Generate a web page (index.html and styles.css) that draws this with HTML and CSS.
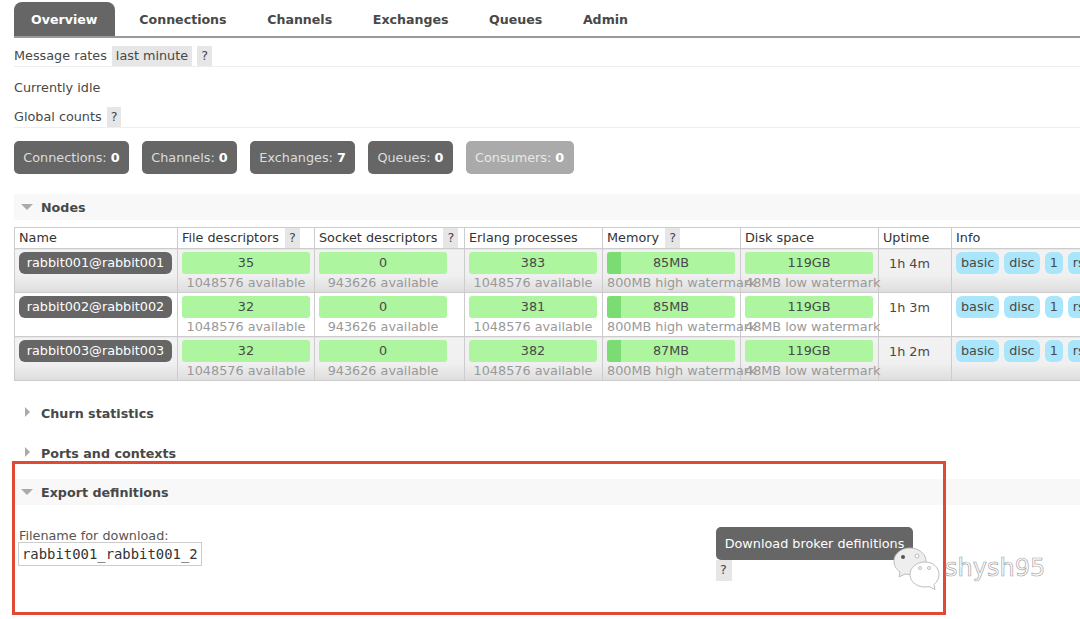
FILE: index.html
```html
<!DOCTYPE html>
<html lang="en">
<head>
<meta charset="UTF-8">
<title>RabbitMQ Management</title>
<link rel="stylesheet" href="styles.css">
</head>
<body>

<ul class="tabs">
  <li class="tab active">Overview</li>
  <li class="tab">Connections</li>
  <li class="tab">Channels</li>
  <li class="tab">Exchanges</li>
  <li class="tab">Queues</li>
  <li class="tab">Admin</li>
</ul>

<div class="main">
  <div class="updatable rates-row">
    <span>Message rates</span>
    <span class="pill">last minute</span>
    <span class="help">?</span>
  </div>
  <p class="idle">Currently idle</p>
  <div class="updatable counts-row">
    <span>Global counts</span>
    <span class="help">?</span>
  </div>

  <div class="totals">
    <div class="total">Connections: <b>0</b></div>
    <div class="total">Channels: <b>0</b></div>
    <div class="total">Exchanges: <b>7</b></div>
    <div class="total">Queues: <b>0</b></div>
    <div class="total faded">Consumers: <b>0</b></div>
  </div>

  <h2 class="section open nodes-head"><i class="arrow-down"></i>Nodes</h2>

  <table class="nodes">
    <colgroup>
      <col class="c-name"><col class="c-file"><col class="c-sock"><col class="c-stat">
      <col class="c-stat"><col class="c-stat"><col class="c-up"><col class="c-info">
    </colgroup>
    <thead>
      <tr>
        <th>Name</th>
        <th>File descriptors <span class="help">?</span></th>
        <th>Socket descriptors <span class="help">?</span></th>
        <th>Erlang processes</th>
        <th>Memory <span class="help">?</span></th>
        <th>Disk space</th>
        <th>Uptime</th>
        <th>Info</th>
      </tr>
    </thead>
    <tbody>
      <tr class="alt1">
        <td><span class="node">rabbit001@rabbit001</span></td>
        <td><div class="bar">35</div><div class="sub">1048576 available</div></td>
        <td><div class="bar">0</div><div class="sub">943626 available</div></td>
        <td><div class="bar">383</div><div class="sub">1048576 available</div></td>
        <td><div class="bar"><span class="fill"></span><span class="val">85MB</span></div><div class="sub left">800MB high watermark</div></td>
        <td><div class="bar">119GB</div><div class="sub left">48MB low watermark</div></td>
        <td class="uptime">1h 4m</td>
        <td><div class="tags"><span class="tag">basic</span><span class="tag">disc</span><span class="tag">1</span><span class="tag">rss</span></div></td>
      </tr>
      <tr class="alt2">
        <td><span class="node">rabbit002@rabbit002</span></td>
        <td><div class="bar">32</div><div class="sub">1048576 available</div></td>
        <td><div class="bar">0</div><div class="sub">943626 available</div></td>
        <td><div class="bar">381</div><div class="sub">1048576 available</div></td>
        <td><div class="bar"><span class="fill"></span><span class="val">85MB</span></div><div class="sub left">800MB high watermark</div></td>
        <td><div class="bar">119GB</div><div class="sub left">48MB low watermark</div></td>
        <td class="uptime">1h 3m</td>
        <td><div class="tags"><span class="tag">basic</span><span class="tag">disc</span><span class="tag">1</span><span class="tag">rss</span></div></td>
      </tr>
      <tr class="alt1">
        <td><span class="node">rabbit003@rabbit003</span></td>
        <td><div class="bar">32</div><div class="sub">1048576 available</div></td>
        <td><div class="bar">0</div><div class="sub">943626 available</div></td>
        <td><div class="bar">382</div><div class="sub">1048576 available</div></td>
        <td><div class="bar"><span class="fill"></span><span class="val">87MB</span></div><div class="sub left">800MB high watermark</div></td>
        <td><div class="bar">119GB</div><div class="sub left">48MB low watermark</div></td>
        <td class="uptime">1h 2m</td>
        <td><div class="tags"><span class="tag">basic</span><span class="tag">disc</span><span class="tag">1</span><span class="tag">rss</span></div></td>
      </tr>
    </tbody>
  </table>

  <h2 class="section churn-head"><i class="arrow-right"></i>Churn statistics</h2>
  <h2 class="section ports-head"><i class="arrow-right"></i>Ports and contexts</h2>
  <h2 class="section open export-head"><i class="arrow-down"></i>Export definitions</h2>

  <div class="export">
    <div class="export-file">
      <div class="file-label">Filename for download:</div>
      <div class="file-input"><div class="file-value">rabbit001_rabbit001_2019-5-1.json</div></div>
    </div>
    <div class="export-action">
      <button class="download" type="button">Download broker definitions</button>
      <span class="help">?</span>
    </div>
  </div>
</div>

<!-- annotation and watermark sit on top of the page -->
<div class="red-box"></div>
<div class="watermark">
  <svg class="wechat" width="49" height="44" viewBox="0 0 49 44" fill="#fff" stroke="#bdbdbd" stroke-width="1">
    <path d="M18 2C9 2 2 8 2 15c0 5 2 8 6 11l-1 5 6-3c2 .5 3 .5 5 .5C27 28.500 34 22 34 15 34 8 27 2 18 2z" fill="#eee"/>
    <path d="M33 16c-9 0-15 6-15 12.500S24 41 33 41c1.500 0 3-.2 4-.5l6 3-1-5c3-2.500 5-6 5-9.500C47 22 42 16 33 16z"/>
    <circle cx="11" cy="11" r="2" fill="#555" stroke="none"/>
    <circle cx="25" cy="10" r="2" fill="#fff"/>
    <circle cx="28" cy="22" r="1.500" fill="#fff"/>
    <circle cx="37" cy="22" r="1.500" fill="#fff"/>
  </svg>
  <span class="mark-text">shysh95</span>
</div>

</body>
</html>
```

FILE: styles.css
```css
* {
  box-sizing: border-box;
  padding: 0;
  margin: 0;
}

html, body {
  height: 100%;
  width: 100%;
  overflow: hidden;
}

body {
  position: relative;
  background: #fff;
  color: #484848;
  font-family: "DejaVu Sans", Verdana, sans-serif;
  font-size: 12.8px;
}

.tabs {
  display: flex;
  list-style: none;
  height: 38px;
  margin: 0 0 0 14px;
  padding-top: 2px;
  border-bottom: 2px solid #999;
}

.tab {
  height: 34px;
  padding: 0 20.300px;
  font-weight: bold;
  font-size: 12.6px;
  line-height: 35px;
  color: #484848;
}

.tab.active {
  width: 101px;
  margin-right: 4px;
  padding: 0 0 0 17px;
  background: #666;
  color: #fff;
  border-radius: 8px 8px 0 0;
}

.main {
  padding: 0 0 0 14px;
}

.updatable {
  display: flex;
  align-items: stretch;
  height: 21px;
  line-height: 20px;
  border-bottom: 1px solid #eee;
}

.rates-row {
  margin-top: 8px;
}

.pill {
  margin-left: 5px;
  padding: 0 4px;
  height: 20px;
  background: #e6e6e6;
}

.help {
  display: inline-block;
  height: 20px;
  line-height: 20px;
  padding: 0 4px;
  margin-left: 5px;
  background: #e6e6e6;
  color: #484848;
  font-weight: normal;
}

.idle {
  margin-top: 13px;
  height: 16px;
  line-height: 16px;
}

.counts-row {
  margin-top: 11px;
}

.totals {
  display: flex;
  gap: 13px;
  margin-top: 13px;
}

.total {
  height: 33px;
  padding: 0 9.300px;
  line-height: 34px;
  background: #666;
  color: #ddd;
  border-radius: 5px;
}

.total b {
  color: #fff;
}

.total.faded {
  background: #aaa;
  color: #e8e8e8;
}

.section {
  position: relative;
  height: 26px;
  padding-left: 27px;
  font-size: 12.7px;
  font-weight: bold;
  line-height: 27px;
  color: #484848;
}

.section.open {
  background: #f8f8f8;
}

.nodes-head {
  margin-top: 20px;
}

.churn-head {
  margin-top: 19px;
}

.ports-head {
  margin-top: 14px;
}

.export-head {
  margin-top: 13px;
}

.arrow-down {
  position: absolute;
  left: 7px;
  top: 10px;
  border-top: 6px solid #aaa;
  border-left: 6px solid transparent;
  border-right: 6px solid transparent;
}

.arrow-right {
  position: absolute;
  left: 11px;
  top: 7px;
  border-left: 5px solid #aaa;
  border-top: 5.500px solid transparent;
  border-bottom: 5.500px solid transparent;
}

.nodes {
  width: 1200px;
  margin-top: 7px;
  table-layout: fixed;
  border-collapse: collapse;
  border: 1px solid #ccc;
}

.c-name { width: 163px; }
.c-file { width: 137px; }
.c-sock { width: 150px; }
.c-stat { width: 138px; }
.c-up { width: 73px; }
.c-info { width: 265px; }

.nodes th {
  height: 21px;
  padding: 0 4px;
  border: 1px solid #ccc;
  font-weight: normal;
  line-height: 20px;
  text-align: left;
  white-space: nowrap;
  color: #333;
  background: #fff;
}

.nodes th .help {
  margin-left: 2px;
}

.nodes td {
  height: 44px;
  padding: 3px 4px 0;
  border: 1px solid #ccc;
  vertical-align: top;
}

.alt1 td {
  background: linear-gradient(#f2f2f2, #f0f0f0 60%, #ddd);
}

.alt2 td {
  background: #fff;
}

.node {
  display: block;
  width: 153px;
  height: 22px;
  line-height: 22px;
  text-align: center;
  background: #666;
  color: #fff;
  border-radius: 6px;
  white-space: nowrap;
}

.bar {
  position: relative;
  width: 128px;
  height: 22px;
  line-height: 22px;
  text-align: center;
  background: #aef5a0;
  color: #484848;
  border-radius: 3px;
  overflow: hidden;
}

.fill {
  position: absolute;
  left: 0;
  top: 0;
  width: 14px;
  height: 100%;
  background: #7cdc74;
}

.val {
  position: relative;
}

.sub {
  width: 128px;
  height: 17px;
  line-height: 17px;
  text-align: center;
  color: #999;
  white-space: nowrap;
}

.sub.left {
  text-align: left;
}

.nodes .uptime {
  padding: 7px 0 0 10px;
  line-height: 16px;
}

.tags {
  display: flex;
  gap: 5px;
}

.tag {
  height: 22px;
  padding: 0 5px;
  line-height: 22px;
  background: #aae6fb;
  border-radius: 6px;
}

.export {
  display: grid;
  grid-template-columns: 698px auto;
  padding: 22px 0 0 4px;
}

.file-label {
  height: 14px;
  margin: 1px 0 0 1px;
  line-height: 16px;
  color: #555;
}

.file-input {
  width: 184px;
  height: 24px;
  padding: 2px 3px 0 3px;
  border: 1px solid #ccc;
  background: #fff;
}

.file-value {
  width: 175px;
  height: 20px;
  overflow: hidden;
  font-family: "DejaVu Sans Mono", "Liberation Mono", monospace;
  font-size: 13.9px;
  line-height: 19px;
  white-space: nowrap;
  color: #333;
}

.export-action .help {
  display: block;
  width: 16px;
  height: 21px;
  margin-left: 0;
  padding: 0 4px;
}

.download {
  display: block;
  width: 197px;
  height: 33px;
  border: 0;
  background: #666;
  color: #fff;
  border-radius: 5px;
  font-family: inherit;
  font-size: 12.8px;
  white-space: nowrap;
}

.red-box {
  position: absolute;
  left: 12px;
  top: 461px;
  width: 934px;
  height: 154px;
  border: 3px solid #e04a35;
}

.watermark {
  position: absolute;
  left: 892px;
  top: 546px;
  display: flex;
  align-items: flex-start;
}

.wechat {
  flex: none;
}

.mark-text {
  margin: 6px 0 0 4px;
  font-family: "DejaVu Sans", sans-serif;
  font-size: 24px;
  line-height: 32px;
  color: #fff;
  -webkit-text-stroke: 0.7px #a8a8a8;
}
```
